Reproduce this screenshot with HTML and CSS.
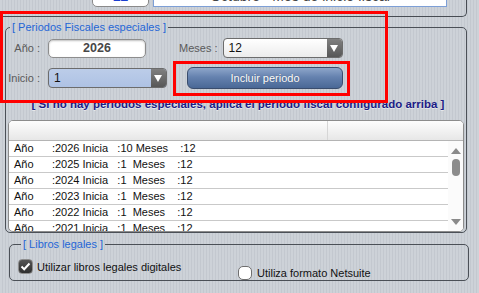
FILE: index.html
```html
<!DOCTYPE html>
<html lang="es">
<head>
  <meta charset="UTF-8">
  <meta name="viewport" content="width=device-width, initial-scale=1.0">
  <title>Periodos fiscales</title>
  <link rel="stylesheet" href="styles.css">
</head>
<body>
  <div class="screen">
    <div class="fs-top">
      <div class="top-row">
        <div class="top-num">12</div>
        <div class="top-month">Octubre - Mes de inicio fiscal</div>
      </div>
    </div>

    <fieldset class="fs fs-periodos">
      <legend>[ Periodos Fiscales especiales ]</legend>

      <div class="form-row row-1">
        <span class="lbl">Año :</span>
        <div class="input-year">2026</div>
        <span class="lbl lbl-meses">Meses :</span>
        <div class="select select-meses">
          <span class="select-val">12</span>
          <span class="select-btn"></span>
        </div>
      </div>

      <div class="form-row row-2">
        <span class="lbl">Inicio :</span>
        <div class="select select-inicio">
          <span class="select-val">1</span>
          <span class="select-btn"></span>
        </div>
        <button class="btn-incluir">Incluir periodo</button>
      </div>

      <p class="note">[ Si no hay periodos especiales, aplica el periodo fiscal configurado arriba ]</p>

      <div class="grid">
        <div class="grid-head">
          <div class="head-cell head-first"></div>
          <div class="head-cell"></div>
        </div>
        <div class="grid-body">
          <div class="rows">
            <div class="row">Año      :2026 Inicia   :10 Meses    :12</div>
            <div class="row">Año      :2025 Inicia   :1  Meses    :12</div>
            <div class="row">Año      :2024 Inicia   :1  Meses    :12</div>
            <div class="row">Año      :2023 Inicia   :1  Meses    :12</div>
            <div class="row">Año      :2022 Inicia   :1  Meses    :12</div>
            <div class="row">Año      :2021 Inicia   :1  Meses    :12</div>
          </div>
          <div class="scrollbar">
            <span class="arrow-up"></span>
            <span class="thumb"></span>
            <span class="arrow-down"></span>
          </div>
        </div>
      </div>
    </fieldset>

    <fieldset class="fs fs-libros">
      <legend>[ Libros legales ]</legend>
      <div class="check-row">
        <label class="check check-first">
          <span class="box box-on">
            <svg width="11" height="9" viewBox="0 0 11 9"><path d="M1.5 4.5 L4.2 7.2 L9.5 1.5" fill="none" stroke="#fff" stroke-width="2"/></svg>
          </span>
          Utilizar libros legales digitales
        </label>
        <label class="check check-second">
          <span class="box box-off"></span>
          Utiliza formato Netsuite
        </label>
      </div>
    </fieldset>

    <!-- annotation frames -->
    <div class="mark mark-a"></div>
    <div class="mark mark-b"></div>
  </div>
</body>
</html>
```

FILE: styles.css
```css
html, body {
  margin: 0;
  padding: 0;
}

body {
  font-family: "Liberation Sans", Arial, sans-serif;
  font-size: 11px;
  color: #111;
  background: #c8cdd4;
}

.screen {
  position: relative;
  width: 479px;
  height: 293px;
  overflow: hidden;
  background-image: repeating-linear-gradient(to right,
    #cdd2d8 0, #cdd2d8 2px,
    #c3c8cf 2px, #c3c8cf 3px);
}

/* upper fieldset, only its bottom edge is in view */
.fs-top {
  box-sizing: border-box;
  margin-left: 3px;
  width: 464px;
  height: 17px;
  border-right: 1px solid #474c53;
  border-bottom: 1px solid #474c53;
  border-bottom-right-radius: 5px;
  overflow: hidden;
}

.top-row {
  display: flex;
  align-items: flex-end;
  height: 7px;
  padding-left: 89px;
}

.top-num {
  box-sizing: border-box;
  width: 57px;
  height: 22px;
  flex: none;
  border: 1px solid #8a8a8a;
  border-radius: 5px;
  background: #fff;
  color: #1a3fd0;
  font-weight: bold;
  font-size: 14px;
  text-align: center;
  line-height: 20px;
}

.top-month {
  box-sizing: border-box;
  width: 294px;
  height: 22px;
  margin-left: 4px;
  flex: none;
  border: 1px solid #7d9fd6;
  background: #fff;
  color: #444;
  font-size: 14px;
  text-align: center;
  line-height: 20px;
}

/* fieldsets */
.fs {
  box-sizing: border-box;
  margin: 0;
  padding: 0;
  border: 1px solid #4b5057;
  border-radius: 5px;
  min-width: 0;
}

.fs legend {
  padding: 0 2px;
  margin-left: 4px;
  line-height: 14px;
  font-size: 11px;
  color: #2466d6;
}

.fs-periodos {
  margin: 3px 0 0 5px;
  width: 462px;
  padding-top: 4px;
}

.form-row {
  display: flex;
  align-items: center;
}

.row-1 {
  height: 20px;
}

.row-2 {
  height: 22px;
  margin-top: 9px;
}

.lbl {
  width: 34px;
  flex: none;
  margin-right: 8px;
  text-align: right;
  color: #5a5a5a;
  white-space: nowrap;
}

.lbl-meses {
  width: auto;
  margin-left: 33px;
  margin-right: 5px;
}

.input-year {
  box-sizing: border-box;
  width: 98px;
  height: 19px;
  margin-top: 1px;
  border: 1px solid #8d8d8d;
  border-radius: 5px;
  background: #fff;
  box-shadow: inset 0 1px 2px rgba(0, 0, 0, 0.25);
  color: #474747;
  font-weight: bold;
  font-size: 12.5px;
  line-height: 17px;
  text-align: center;
}

.select {
  box-sizing: border-box;
  display: flex;
  height: 20px;
  border: 1px solid #6c6c6c;
  border-radius: 4px;
  background: linear-gradient(#ffffff, #ececec);
  overflow: hidden;
}

.select-meses {
  width: 120px;
}

.select-inicio {
  width: 119px;
  background: linear-gradient(#bccde9, #aec2e4);
}

.select-val {
  flex: 1;
  padding-left: 5px;
  font-size: 12px;
  line-height: 18px;
  color: #111;
}

.select-btn {
  position: relative;
  width: 15px;
  flex: none;
  background: linear-gradient(#808080, #575757);
}

.select-btn::after {
  content: '';
  position: absolute;
  left: 3px;
  top: 6px;
  border-left: 4.5px solid transparent;
  border-right: 4.5px solid transparent;
  border-top: 7px solid #fff;
}

.btn-incluir {
  box-sizing: border-box;
  width: 156px;
  height: 22px;
  margin-left: 20px;
  padding: 0;
  border: 1px solid #3a4d6d;
  border-radius: 6px;
  background: linear-gradient(#8ea6ca, #6582af 45%, #4a6896);
  color: #fff;
  font-family: "Liberation Sans", Arial, sans-serif;
  font-size: 11px;
  text-shadow: 0 0 1px rgba(0, 0, 0, 0.35);
}

.note {
  margin: 8px 0 0 4px;
  line-height: 14px;
  text-align: center;
  font-size: 11.5px;
  font-weight: bold;
  color: #1c1c86;
  text-shadow: 0 1px 0 rgba(255, 255, 255, 0.5);
  white-space: nowrap;
}

/* list */
.grid {
  box-sizing: border-box;
  margin: 9px 2px 0 2px;
  height: 112px;
  border: 1px solid #8c8c8c;
  border-radius: 5px;
  background: #fff;
  overflow: hidden;
}

.grid-head {
  display: flex;
  height: 19px;
  border-bottom: 1px solid #b4b4b4;
  background: linear-gradient(#fdfdfd, #e7e7e7);
}

.head-cell {
  flex: 1;
}

.head-first {
  flex: none;
  width: 318px;
  border-right: 1px solid #d6d6d6;
}

.grid-body {
  display: flex;
  height: 91px;
}

.rows {
  flex: 1;
  overflow: hidden;
}

.row {
  height: 15px;
  padding-left: 5px;
  border-bottom: 1px solid #c9c9c9;
  line-height: 15px;
  white-space: pre;
  color: #111;
}

.scrollbar {
  width: 15px;
  flex: none;
  display: flex;
  flex-direction: column;
  align-items: center;
  padding: 7px 0 7px;
  box-sizing: border-box;
  background: #fbfbfb;
}

.arrow-up {
  border-left: 5px solid transparent;
  border-right: 5px solid transparent;
  border-bottom: 6px solid #8a8a8a;
}

.thumb {
  width: 8px;
  height: 17px;
  margin-top: 5px;
  border-radius: 4px;
  background: #8c8c8c;
}

.arrow-down {
  margin-top: auto;
  border-left: 5px solid transparent;
  border-right: 5px solid transparent;
  border-top: 6px solid #8a8a8a;
}

/* libros legales */
.fs-libros {
  margin: 4px 0 0 9px;
  width: 460px;
  padding: 8px 0 0 8px;
}

.fs-libros legend {
  margin-left: 3px;
}

.check-row {
  display: flex;
  align-items: flex-start;
  height: 21px;
}

.check {
  display: flex;
  align-items: center;
  gap: 4px;
  color: #111;
  white-space: nowrap;
}

.check-first {
  width: 220px;
  flex: none;
}

.check-second {
  margin-top: 7px;
  gap: 5px;
}

.box {
  box-sizing: border-box;
  display: flex;
  align-items: center;
  justify-content: center;
  width: 15px;
  height: 15px;
  flex: none;
}

.box-on {
  border: 1px solid #8d8d8d;
  border-radius: 4px;
  background: linear-gradient(#555, #2e2e2e);
}

.box-off {
  width: 14px;
  height: 14px;
  border: 1px solid #6f6f6f;
  border-radius: 5px;
  background: #fff;
}

/* red annotation frames drawn over the form */
.mark {
  position: absolute;
  box-sizing: border-box;
  border: 3px solid #ff0000;
}

.mark-a {
  left: 0;
  top: 11px;
  width: 388px;
  height: 92px;
}

.mark-b {
  left: 173px;
  top: 61px;
  width: 177px;
  height: 35px;
}
```
